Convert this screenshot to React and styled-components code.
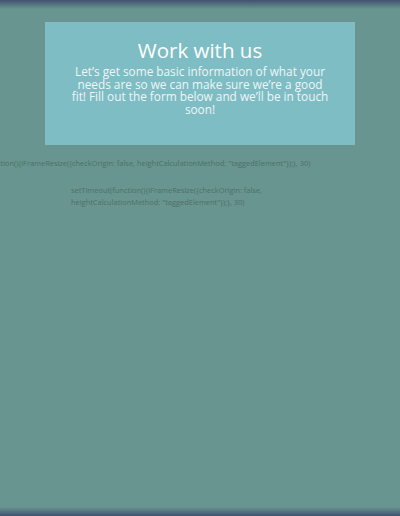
import React from 'react'
import styled, {createGlobalStyle} from 'styled-components';

const Global = createGlobalStyle`
  html, body{
    margin: 0;
    padding: 0;
    background: #68958f;
  }
  #root{
    min-height: 100vh;
  }
`;

const snippet = 'setTimeout(function(){iFrameResize({checkOrigin: false, heightCalculationMethod: "taggedElement"});}, 30)';

const App = ()=> {
  return (
    <Page>
      <Global />
      <Banner>
        <h1>Work with us</h1>
        <p>
          Let’s get some basic information of what your<br />
          needs are so we can make sure we’re a good<br />
          fit! Fill out the form below and we’ll be in touch<br />
          soon!
        </p>
      </Banner>
      <Script $wide>{snippet}</Script>
      <Script>{snippet}</Script>
    </Page>
  )
}
export default App;

const Page = styled.div`
  box-sizing: border-box;
  min-height: 100vh;
  padding-top: 22px;
  overflow: hidden;
  font-family: "Open Sans", sans-serif;
  background:
    linear-gradient(to bottom, rgba(62,78,112,0.95) 0, rgba(62,78,112,0) 9px),
    linear-gradient(to top, rgba(62,78,112,0.95) 0, rgba(62,78,112,0) 9px),
    #68958f;
`;

const Banner = styled.section`
  box-sizing: border-box;
  width: 310px;
  height: 123px;
  margin: 0 45px;
  padding: 13px 10px 0;
  background-color: #7ebdc4;
  text-align: center;
  color: #fff;
  h1{
    margin: 0;
    font-size: 20.5px;
    line-height: 30px;
    font-weight: 500;
  }
  p{
    margin: 0;
    font-size: 11.8px;
    line-height: 12.7px;
    color: #eef6f7;
    white-space: nowrap;
  }
`;

const Script = styled.div`
  color: #4d6f6a;
  font-size: 7.45px;
  line-height: 12px;
  ${p => p.$wide ? `
    white-space: nowrap;
    margin: 12px 0 0 -56px;
  ` : `
    width: 205px;
    margin: 15px 0 0 71px;
  `}
`;
